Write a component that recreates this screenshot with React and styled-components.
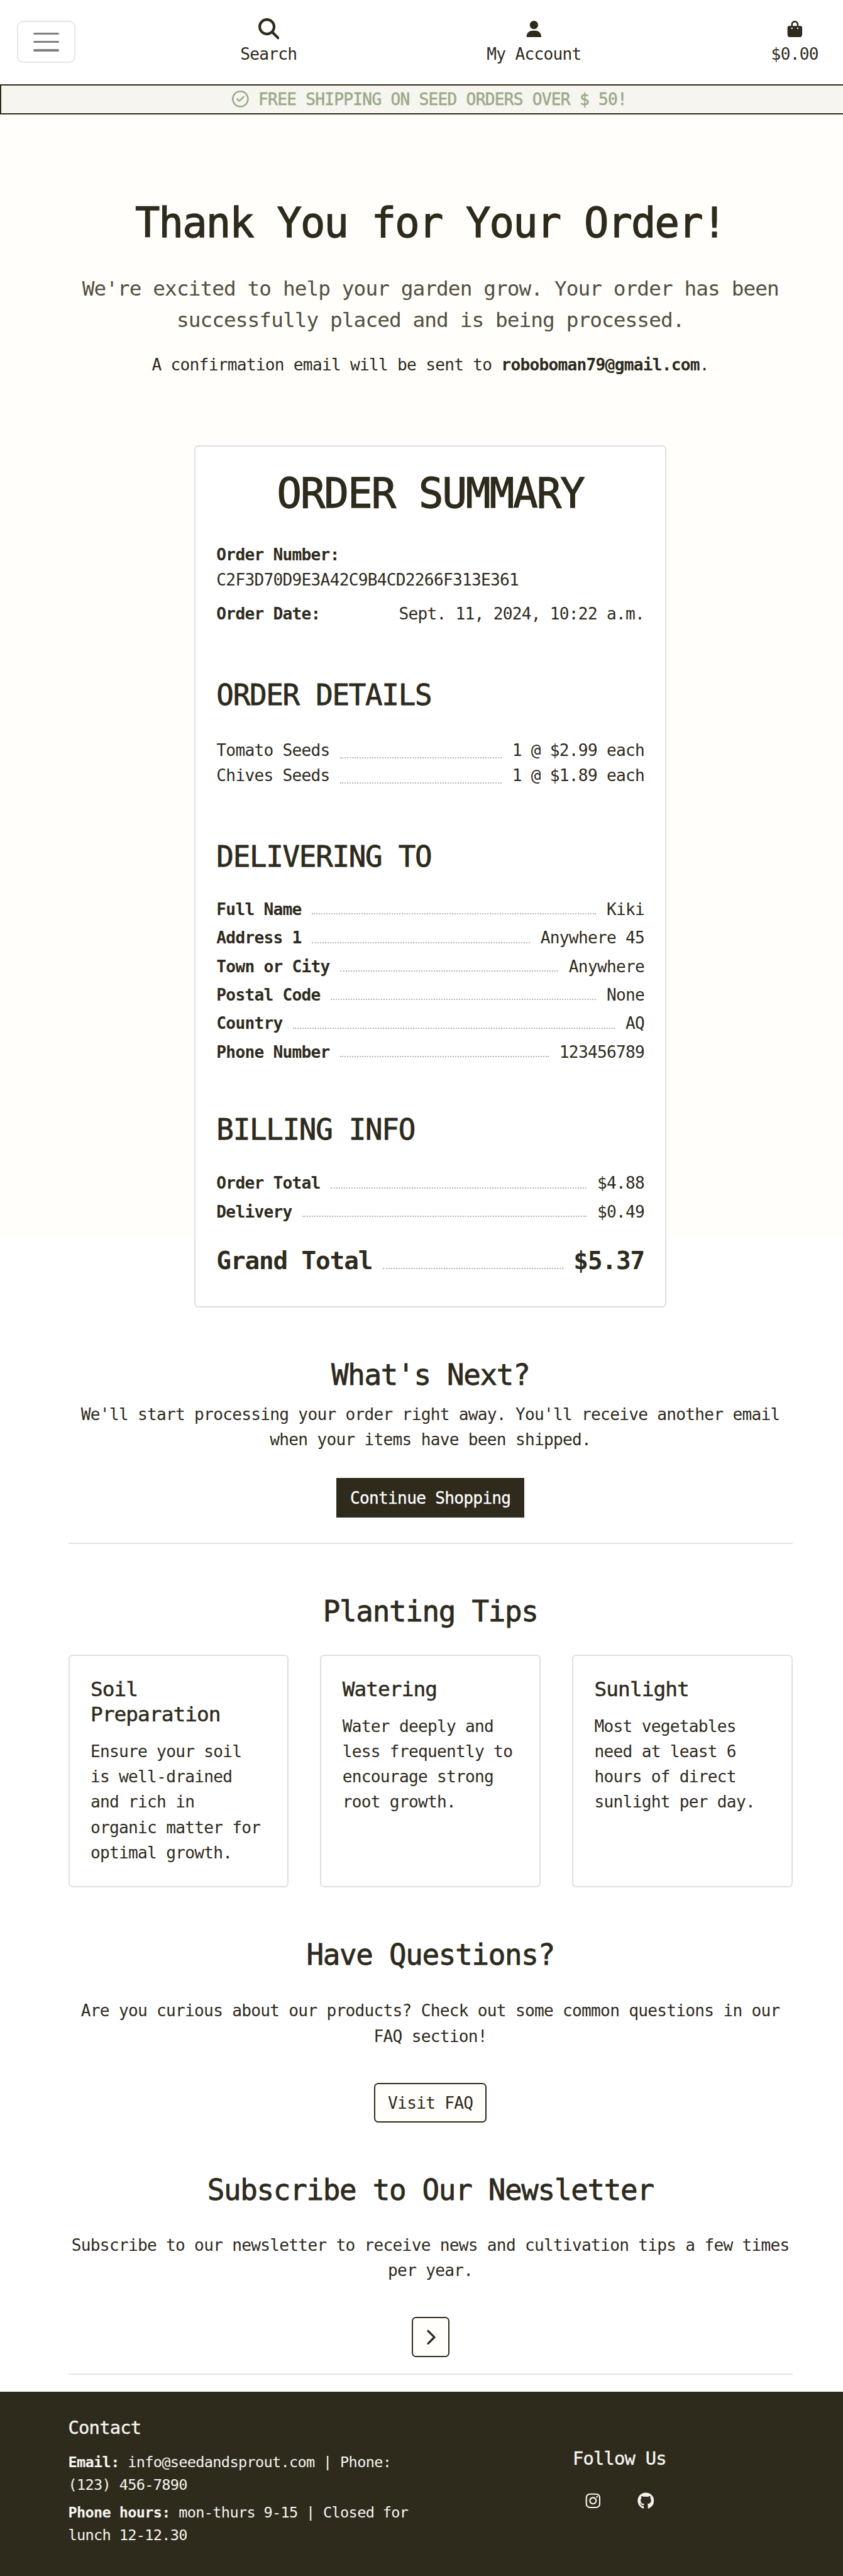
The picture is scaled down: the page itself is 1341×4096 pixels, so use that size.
import React from "react";
import styled, { createGlobalStyle, css } from "styled-components";
import {
  FaMagnifyingGlass,
  FaUser,
  FaBagShopping,
  FaRegCircleCheck,
  FaChevronRight,
  FaInstagram,
  FaGithub,
} from "react-icons/fa6";

const SCALE = 1341 / 1606;
const u = (n) => `${(n * SCALE).toFixed(3)}px`;
const type = (size, line) => css`
  font-size: ${u(size * 0.98)};
  line-height: ${u(line)};
`;

const ink = "#2e2a1c";
const cream = "#fffefa";
const sand = "#f6f5f0";
const line = "#dedfe0";

const GlobalStyle = createGlobalStyle`
  *, *::before, *::after { box-sizing: border-box; letter-spacing: -0.028em; }
  html, body { margin: 0; background: #fff; }
  body {
    width: 1341px;
    color: ${ink};
    font-family: "DejaVu Sans Mono", "Liberation Mono", monospace;
    ${type(32, 48)}
  }
  h1, h2, h3, p { margin: 0; font-weight: 400; }
  svg { display: block; flex: none; }
`;

const Page = styled.div`
  height: 4096px;
  display: flex;
  flex-direction: column;
  overflow: hidden;
`;

const Navbar = styled.header`
  height: ${u(160)};
  flex: none;
  padding: 0 ${u(47)} 0 ${u(32)};
  display: flex;
  justify-content: space-between;
  align-items: center;
`;

const Toggler = styled.button`
  width: ${u(112)};
  height: ${u(80)};
  margin-right: ${u(-48)};
  padding: 0;
  border: 2px solid #e5e5e5;
  border-radius: ${u(12)};
  background: none;
  display: flex;
  flex-direction: column;
  align-items: center;
  justify-content: center;
  gap: ${u(12)};
`;

const TogglerBar = styled.span`
  width: ${u(48)};
  height: ${u(4)};
  border-radius: ${u(2)};
  background: #808080;
`;

const NavItem = styled.a`
  display: flex;
  flex-direction: column;
  align-items: center;
  padding-bottom: ${u(2)};
`;

const NavIcon = styled.span`
  height: ${u(48)};
  display: flex;
  align-items: center;
  font-size: ${(p) => u(p.$size || 32)};
`;

const Banner = styled.div`
  height: ${u(58)};
  flex: none;
  border: 2px solid ${ink};
  border-right: 0;
  background: ${sand};
  color: #9aa987;
  display: flex;
  align-items: center;
  justify-content: center;
  padding-left: ${u(28)};
  gap: ${u(18)};
  -webkit-text-stroke: 0.5px #9aa987;
`;

const Main = styled.main`
  height: ${u(4336)};
  flex: none;
  padding: 0 ${u(96)} 0 ${u(130)};
  background: linear-gradient(${cream}, ${cream}) no-repeat 0 0 / 100% ${u(2140)};
  display: flex;
  flex-direction: column;
  align-items: center;
  text-align: center;
`;

const Title = styled.h1`
  ${type(80, 96)}
  margin-top: ${(p) => u(p.$top)};
  text-align: center;
  -webkit-text-stroke: 1.3px ${ink};
`;

const Heading = styled.h2`
  ${type(56, 67.2)}
  margin-top: ${(p) => u(p.$top)};
  -webkit-text-stroke: 0.8px ${ink};
`;

const Lead = styled.p`
  ${type(40, 60)}
  margin-top: ${u(47.4)};
  color: #524e41;
`;

const Text = styled.p`
  margin-top: ${(p) => u(p.$top || 0)};
`;

const Receipt = styled.section`
  width: ${u(900)};
  height: ${u(1641)};
  margin-top: ${u(129.6)};
  padding: ${u(40)} ${u(40)} 0;
  border: 2px solid ${line};
  border-radius: ${u(8)};
  background: #fff;
  text-align: left;
`;

const Split = styled.div`
  display: flex;
  justify-content: space-between;
  margin-top: ${u(16)};
`;

const Rows = styled.div`
  display: flex;
  flex-direction: column;
  gap: ${(p) => u(p.$gap || 0)};
  margin-top: ${(p) => u(p.$top)};
`;

const Row = styled.div`
  display: flex;
  justify-content: space-between;
  gap: ${u(20)};
  ${(p) => p.$grand && type(48, 57.6)}
  font-weight: ${(p) => (p.$grand ? 700 : 400)};
`;

const Leader = styled.span`
  flex: 1;
  height: ${(p) => u(p.$drop)};
  border-bottom: 2px dotted #b4b4b4;
`;

const Button = styled.button`
  flex: none;
  width: ${(p) => u(p.$width)};
  height: ${u(76)};
  margin-top: ${(p) => u(p.$top)};
  padding: 0;
  display: flex;
  align-items: center;
  justify-content: center;
  font-family: inherit;
  ${type(32, 48)}
  color: ${(p) => (p.$solid ? "#fff" : ink)};
  background: ${(p) => (p.$solid ? ink : cream)};
  border: 2px solid ${ink};
  border-radius: ${(p) => (p.$solid ? 0 : u(8))};
  -webkit-text-stroke: ${(p) => (p.$solid ? "0.3px #fff" : "0")};
`;

const Rule = styled.hr`
  flex: none;
  width: 100%;
  height: 2px;
  border: 0;
  margin: ${(p) => u(p.$top)} 0 0;
  background: #e4e4e4;
`;

const Tips = styled.div`
  width: 100%;
  height: ${u(444)};
  margin-top: ${u(48.2)};
  display: grid;
  grid-template-columns: repeat(3, 1fr);
  gap: ${u(60)};
  text-align: left;
`;

const Tip = styled.article`
  border: 2px solid ${line};
  border-radius: ${u(8)};
  padding: ${u(40)};
`;

const TipTitle = styled.h3`
  ${type(40, 48)}
  margin-bottom: ${u(23)};
  -webkit-text-stroke: 0.5px ${ink};
`;

const Footer = styled.footer`
  flex: 1;
  background: ${ink};
  color: ${sand};
  padding: ${u(49)} ${u(96)} 0 ${u(130)};
  display: flex;
`;

const Contact = styled.div`
  width: ${u(690)};
`;

const FooterTitle = styled.h3`
  ${type(35.2, 42.24)}
  -webkit-text-stroke: 0.4px ${sand};
`;

const FooterText = styled.p`
  ${type(28.8, 43.2)}
  margin-top: ${(p) => u(p.$top)};
`;

const Follow = styled.div`
  margin-left: ${u(271)};
  padding-top: ${u(58)};
`;

const Socials = styled.div`
  display: flex;
  gap: ${u(68)};
  padding-left: ${u(23)};
  margin-top: ${u(43)};
  font-size: ${u(32)};
`;

const items = [
  ["Tomato Seeds", "1 @ $2.99 each"],
  ["Chives Seeds", "1 @ $1.89 each"],
];

const delivery = [
  ["Full Name", "Kiki"],
  ["Address 1", "Anywhere 45"],
  ["Town or City", "Anywhere"],
  ["Postal Code", "None"],
  ["Country", "AQ"],
  ["Phone Number", "123456789"],
];

const billing = [
  ["Order Total", "$4.88"],
  ["Delivery", "$0.49"],
];

const tips = [
  ["Soil Preparation", "Ensure your soil is well-drained and rich in organic matter for optimal growth."],
  ["Watering", "Water deeply and less frequently to encourage strong root growth."],
  ["Sunlight", "Most vegetables need at least 6 hours of direct sunlight per day."],
];

const LabelledRow = ({ label, value }) => (
  <Row>
    <strong>{label}</strong>
    <Leader $drop={34} />
    <span>{value}</span>
  </Row>
);

export default function App() {
  return (
    <Page>
      <GlobalStyle />
      <Navbar>
        <Toggler aria-label="Toggle navigation">
          <TogglerBar />
          <TogglerBar />
          <TogglerBar />
        </Toggler>
        <NavItem>
          <NavIcon $size={40}><FaMagnifyingGlass /></NavIcon>
          Search
        </NavItem>
        <NavItem>
          <NavIcon><FaUser /></NavIcon>
          My Account
        </NavItem>
        <NavItem>
          <NavIcon><FaBagShopping /></NavIcon>
          $0.00
        </NavItem>
      </Navbar>
      <Banner>
        <FaRegCircleCheck size={u(32)} />
        <span>FREE SHIPPING ON SEED ORDERS OVER $ 50!</span>
      </Banner>
      <Main>
        <Title $top={158.5}>Thank You for Your Order!</Title>
        <Lead>
          We're excited to help your garden grow. Your order has been successfully placed and is being processed.
        </Lead>
        <Text $top={31}>
          A confirmation email will be sent to <strong>roboboman79@gmail.com</strong>.
        </Text>

        <Receipt>
          <Title $top={0}>ORDER SUMMARY</Title>
          <Text $top={46}>
            <strong>Order Number:</strong>
            <br />
            C2F3D70D9E3A42C9B4CD2266F313E361
          </Text>
          <Split>
            <strong>Order Date:</strong>
            <span>Sept. 11, 2024, 10:22 a.m.</span>
          </Split>
          <Heading $top={96.5}>ORDER DETAILS</Heading>
          <Rows $top={48.4}>
            {items.map(([name, price]) => (
              <Row key={name}>
                <span>{name}</span>
                <Leader $drop={39} />
                <span>{price}</span>
              </Row>
            ))}
          </Rows>
          <Heading $top={96.4}>DELIVERING TO</Heading>
          <Rows $top={43} $gap={6.4}>
            {delivery.map(([l, v]) => <LabelledRow key={l} label={l} value={v} />)}
          </Rows>
          <Heading $top={90}>BILLING INFO</Heading>
          <Rows $top={44.6} $gap={6.4}>
            {billing.map(([l, v]) => <LabelledRow key={l} label={l} value={v} />)}
          </Rows>
          <Rows $top={40.8}>
            <Row $grand>
              <span>Grand Total</span>
              <Leader $drop={44.5} />
              <span>$5.37</span>
            </Row>
          </Rows>
        </Receipt>

        <Heading $top={95}>What's Next?</Heading>
        <Text $top={17.6}>
          We'll start processing your order right away. You'll receive another email when your items have been shipped.
        </Text>
        <Button $solid $width={358} $top={49}>Continue Shopping</Button>
        <Rule $top={47.8} />

        <Heading $top={94.6}>Planting Tips</Heading>
        <Tips>
          {tips.map(([title, body]) => (
            <Tip key={title}>
              <TipTitle>{title}</TipTitle>
              <Text>{body}</Text>
            </Tip>
          ))}
        </Tips>

        <Heading $top={94.6}>Have Questions?</Heading>
        <Text $top={49.2}>
          Are you curious about our products? Check out some common questions in our FAQ section!
        </Text>
        <Button $width={214} $top={65}>Visit FAQ</Button>

        <Heading $top={94.6}>Subscribe to Our Newsletter</Heading>
        <Text $top={47.2}>
          Subscribe to our newsletter to receive news and cultivation tips a few times per year.
        </Text>
        <Button $width={72} $top={65} aria-label="Subscribe">
          <FaChevronRight size={u(32)} />
        </Button>
        <Rule $top={32} />
      </Main>
      <Footer>
        <Contact>
          <FooterTitle>Contact</FooterTitle>
          <FooterText $top={21.6}>
            <strong>Email:</strong> <span>info@seedandsprout.com | Phone:</span>
            <br />
            <span>(123) 456-7890</span>
          </FooterText>
          <FooterText $top={9.6}>
            <strong>Phone hours:</strong> <span>mon-thurs 9-15 | Closed for</span>
            <br />
            <span>lunch 12-12.30</span>
          </FooterText>
        </Contact>
        <Follow>
          <FooterTitle>Follow Us</FooterTitle>
          <Socials>
            <FaInstagram />
            <FaGithub />
          </Socials>
        </Follow>
      </Footer>
    </Page>
  );
}
